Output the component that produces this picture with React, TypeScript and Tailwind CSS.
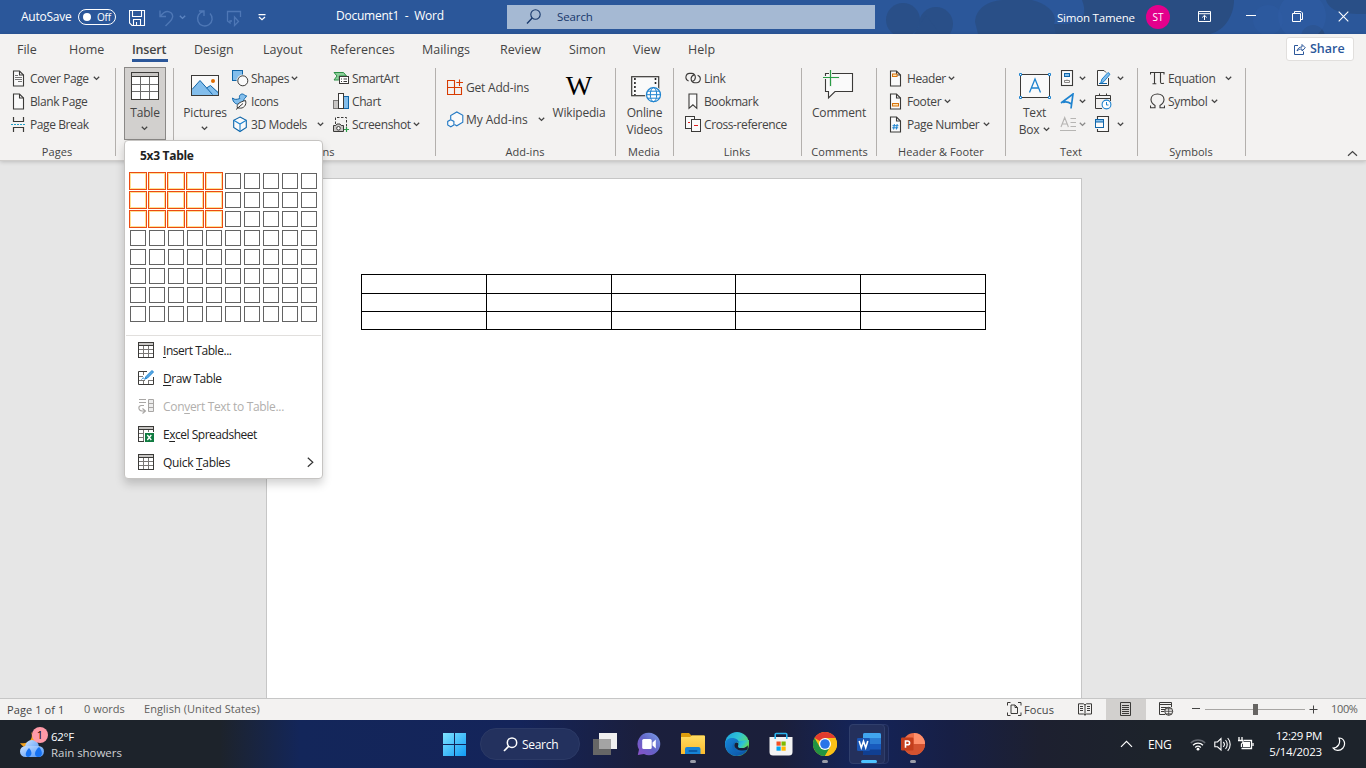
import React from "react";

type P = { className?: string };

function Svg({ w, h, className = "", children }: { w: number; h: number; className?: string; children: React.ReactNode }) {
  return (
    <svg width={w} height={h} viewBox={`0 0 ${w} ${h}`} fill="none" className={`block shrink-0 ${className}`}>
      {children}
    </svg>
  );
}

const INK = "#3b3a38";
const BLUE = "#1e83cf";

function Caret({ className = "" }: P) {
  return (
    <Svg w={7} h={5} className={className}>
      <path d="M0.8 0.8L3.5 3.4L6.2 0.8" stroke="#444" strokeWidth="1.3" />
    </Svg>
  );
}

/* ---------- Ribbon icons ---------- */

function PageShape({ children }: { children?: React.ReactNode }) {
  return (
    <Svg w={13} h={17}>
      <path d="M1.5 1H7.5L11.5 5V16H1.5Z" fill="#fafafa" stroke={INK} strokeWidth="1.1" />
      <path d="M7.5 1V5H11.5" stroke={INK} strokeWidth="1.1" />
      {children}
    </Svg>
  );
}
const CoverIcon = () => (
  <PageShape>
    <path d="M3 5.5H6M3 7.5H10M3 9.5H10M6 11.5H10" stroke="#777" strokeWidth="1" />
  </PageShape>
);
const HeaderIcon = () => (
  <PageShape>
    <rect x="3.5" y="4" width="4.5" height="2.5" fill="#fbe3b4" stroke="#d9730c" />
  </PageShape>
);
const FooterIcon = () => (
  <PageShape>
    <rect x="3.5" y="10.5" width="6" height="2.5" fill="#fbe3b4" stroke="#d9730c" />
  </PageShape>
);
const PageNumberIcon = () => (
  <PageShape>
    <path d="M5.4 8L4.6 13.5M8.2 8L7.4 13.5M3.5 9.7H9.5M3.2 11.8H9.2" stroke={BLUE} strokeWidth="1" />
  </PageShape>
);
const PageBreakIcon = () => (
  <Svg w={15} h={17}>
    <path d="M2.5 1V5.5H12.5V1M2.5 16V11.5H12.5V16" stroke={INK} strokeWidth="1.2" />
    <path d="M0 8.5H15" stroke="#1fa0c8" strokeDasharray="2 1" />
  </Svg>
);
const TableBigIcon = () => (
  <Svg w={28} h={28}>
    <rect x="0.5" y="0.5" width="27" height="27" fill="#fff" />
    <rect x="0.5" y="0.5" width="27" height="4" fill="#c8c6c4" />
    <path d="M9.5 5V27M18.5 5V27M1 12.5H27M1 19.5H27" stroke="#6b6b6b" />
    <path d="M0.5 4.5H27.5" stroke={INK} />
    <rect x="0.5" y="0.5" width="27" height="27" stroke={INK} />
  </Svg>
);
const PicturesIcon = () => (
  <Svg w={28} h={21}>
    <rect x="0.5" y="0.5" width="27" height="20" fill="#fafafa" stroke={INK} />
    <path d="M1 14.5L9 5.5L22 20H1Z" fill="#83beec" />
    <path d="M15 13.5L19.5 10.5L27 17V20H21.5Z" fill="#83beec" />
    <path d="M1 14.5L9 5.5L21.5 19.5M15.5 13L19.5 10.5L27 17.5" stroke="#0f65a8" />
    <circle cx="22" cy="6" r="2" fill="#e06c00" />
    <rect x="0.5" y="0.5" width="27" height="20" stroke={INK} />
  </Svg>
);
const ShapesIcon = () => (
  <Svg w={17} h={17}>
    <rect x="0.5" y="0.5" width="10" height="10" fill="#83beec" stroke="#0f65a8" />
    <circle cx="10.8" cy="10.8" r="6.2" fill="#f3f2f1" />
    <circle cx="10.8" cy="10.8" r="5" fill="#fafafa" stroke={INK} />
  </Svg>
);
const IconsIcon = () => (
  <Svg w={17} h={17}>
    <path d="M0.5 5C2.5 7 5 6.5 7.8 5.5C6.5 3 8.5 0.8 10.5 1C12 1.2 12.8 2.8 14.5 2.8C14 4.8 12.5 5 12 6.5C11 11 6 12 3.5 10.5C1.5 9 0.5 7 0.5 5Z" fill="#83beec" stroke="#0f65a8" />
    <path d="M5.5 15C4 11 8 9 13.5 7.5C15 12 11.5 16 7 15Z" fill="#fafafa" stroke={INK} />
    <path d="M4 16.5L11 10.5" stroke={INK} />
  </Svg>
);
const ModelsIcon = () => (
  <Svg w={17} h={17}>
    <path d="M8 1L14.3 4.3V11.5L8 15.5L1.7 11.5V4.3Z" fill="#fafafa" stroke="#0f65a8" strokeWidth="1.1" />
    <path d="M1.7 4.3L8 8L14.3 4.3M8 8V15.5" stroke={BLUE} strokeWidth="1.1" />
  </Svg>
);
const SmartArtIcon = () => (
  <Svg w={17} h={15}>
    <path d="M1 1.5H10.5L13.5 5H6V9H1L4 5Z" fill="#8ccf9a" stroke="#2a8f44" />
    <rect x="5.8" y="5" width="11" height="9" fill="#f3f2f1" />
    <rect x="6.5" y="5.5" width="9" height="7" fill="#fff" stroke={INK} />
    <path d="M8 8H9M10.5 8H14M8 10.5H9M10.5 10.5H14" stroke={INK} />
  </Svg>
);
const ChartIcon = () => (
  <Svg w={17} h={17}>
    <rect x="0.5" y="7.5" width="5" height="8" fill="#c8c6c4" stroke="#797775" />
    <rect x="10.5" y="3.5" width="5" height="12" fill="#83beec" stroke="#0f65a8" />
    <rect x="5.5" y="0.5" width="5" height="15" fill="#fff" stroke={INK} />
  </Svg>
);
const ScreenshotIcon = () => (
  <Svg w={17} h={17}>
    <path d="M2.5 8V1.5H13.5V11" stroke={INK} strokeDasharray="2.5 1.5" />
    <path d="M0.5 9.5H2.8L4 8H7L8.2 9.5H10.5V15.5H0.5Z" fill="#c8c6c4" stroke={INK} />
    <circle cx="5.5" cy="12.3" r="1.8" fill="#fff" stroke={INK} />
    <path d="M13.5 11V16M11 13.5H16" stroke="#2a9d46" strokeWidth="1.2" />
  </Svg>
);
const GetAddinsIcon = () => (
  <Svg w={17} h={17}>
    <path d="M0.5 1.5H7.5V15.5H0.5ZM0.5 8.5H14.5V15.5H0.5Z" stroke="#d83b01" strokeWidth="1.1" />
    <path d="M12.5 0.5V7M9.3 3.5H16" stroke="#d83b01" strokeWidth="1.1" />
  </Svg>
);
const MyAddinsIcon = () => (
  <Svg w={17} h={17}>
    <path d="M3.7 8V4.5L9.8 1L15.8 4.3V11.2L9.8 14.8L7.5 13.5" fill="#fafafa" stroke="#2379c4" strokeWidth="1.1" />
    <path d="M3.8 8.7L6.9 10.4V14L3.8 15.8L0.7 14V10.4Z" fill="#fafafa" stroke="#2379c4" strokeWidth="1.1" />
  </Svg>
);
const VideoIcon = () => (
  <Svg w={31} h={27}>
    <rect x="0.7" y="0.7" width="27" height="19" fill="#fafafa" stroke={INK} strokeWidth="1.2" />
    <path d="M3.9 2V19M24.5 2V10" stroke="#222" strokeWidth="1.6" strokeDasharray="2 2" />
    <circle cx="22.5" cy="18.7" r="8.5" fill="#f3f2f1" />
    <circle cx="22.5" cy="18.7" r="7" fill="#fff" stroke={BLUE} strokeWidth="1.2" />
    <ellipse cx="22.5" cy="18.7" rx="3.2" ry="7" stroke={BLUE} />
    <path d="M15.5 18.7H29.5M16.8 15.2H28.2M16.8 22.2H28.2" stroke={BLUE} />
  </Svg>
);
const LinkIcon = () => (
  <Svg w={17} h={13}>
    <path d="M3.6 9A3.9 3.9 0 0 1 4.6 1.4H6.6A4 4 0 0 1 7.2 9.3M12.6 3.2A3.9 3.9 0 0 1 11.6 10.8H9.6A4 4 0 0 1 9 3" stroke={INK} strokeWidth="1.1" />
  </Svg>
);
const BookmarkIcon = () => (
  <Svg w={10} h={17}>
    <path d="M1 1H8.8V15.3L4.9 11.8L1 15.3Z" fill="#fafafa" stroke={INK} strokeWidth="1.1" />
  </Svg>
);
const CrossRefIcon = () => (
  <Svg w={17} h={17}>
    <rect x="0.5" y="0.5" width="9" height="12" fill="#fafafa" stroke={INK} />
    <rect x="6.5" y="3.5" width="9" height="12" fill="#fafafa" stroke={INK} />
    <path d="M3 6.5H5M9 9.5H13" stroke="#e02020" strokeWidth="1.2" />
  </Svg>
);
const CommentIcon = () => (
  <Svg w={31} h={30}>
    <path d="M2.5 3.5H29.5V21.5H12L5.5 28V21.5H2.5Z" fill="#fafafa" stroke={INK} strokeWidth="1.1" />
    <path d="M0 7.5H17M7.5 0V17" stroke="#f3f2f1" strokeWidth="3" />
    <path d="M0 7.5H16M7.5 0V16" stroke="#2a9d46" strokeWidth="1.2" />
  </Svg>
);
const TextBoxIcon = () => (
  <Svg w={33} h={27}>
    <rect x="1.5" y="1.5" width="29" height="23" fill="#fafafa" stroke={INK} />
    <path d="M10.5 19.5L16 6L21.5 19.5M12.5 15H19.5" stroke={BLUE} strokeWidth="1.3" />
    <path d="M0.5 0.5H2.5V2.5H0.5ZM29.5 0.5H31.5V2.5H29.5ZM0.5 23.5H2.5V25.5H0.5ZM29.5 23.5H31.5V25.5H29.5Z" fill="#fff" stroke={BLUE} />
  </Svg>
);
const QuickPartsIcon = () => (
  <Svg w={17} h={17}>
    <rect x="1.5" y="0.5" width="11" height="15" fill="#fafafa" stroke={INK} strokeWidth="1.1" />
    <rect x="4.5" y="3.5" width="5" height="3" fill="#83beec" stroke="#0f65a8" />
    <path d="M4.5 10.5H7V9.5M4.5 12.5H9.5V10.5H4.5Z" stroke="#8a8886" />
  </Svg>
);
const WordArtIcon = () => (
  <Svg w={17} h={17}>
    <path d="M1 10L13 1L11 15.5M3 9.5C6 8 8.5 9 11.5 11" stroke={BLUE} strokeWidth="1.7" />
  </Svg>
);
const DropCapIcon = () => (
  <Svg w={17} h={17}>
    <path d="M1 11L4.7 1.5L8.4 11M2.2 8H7.2M10.5 2.5H16M10.5 6.5H16M10.5 10.5H16M0 14.5H16" stroke="#8f8d8b" strokeWidth="1.1" />
  </Svg>
);
const SignatureIcon = () => (
  <Svg w={17} h={17}>
    <path d="M13.5 8V15.5H2.5V0.5H9L11 2.5" fill="#fafafa" stroke={INK} />
    <path d="M5.5 13.5L7 9L13 2.5L15 4.2L9 11.5Z" fill="#83beec" stroke={BLUE} />
    <path d="M4 13.5H12" stroke="#0f65a8" />
  </Svg>
);
const DateIcon = () => (
  <Svg w={17} h={17}>
    <path d="M7 15.5H0.5V2.5H15.5V8M0.5 5.5H15.5M4.5 0.5V3M11.5 0.5V3" stroke={INK} />
    <circle cx="11.5" cy="11.5" r="4.4" fill="#fff" stroke={BLUE} strokeWidth="1.1" />
    <path d="M11.5 9V12H13.5" stroke={BLUE} />
  </Svg>
);
const ObjectIcon = () => (
  <Svg w={17} h={17}>
    <path d="M2.5 3V0.5H13.5V15.5H2.5V13" fill="#fafafa" stroke={INK} strokeWidth="1.1" />
    <rect x="0.5" y="3.5" width="8" height="8" fill="#fafafa" stroke="#0f65a8" />
    <rect x="0.5" y="3.5" width="8" height="2.5" fill="#83beec" stroke="#0f65a8" />
  </Svg>
);
const PiIcon = () => (
  <Svg w={15} h={15}>
    <path d="M0.5 3.5V1.5H14V3.5M4.5 1.5V12.5M2.5 12.7H6.3M10.5 1.5V11C10.5 12.8 12 12.8 14 12.2" stroke={INK} strokeWidth="1.1" />
  </Svg>
);
const OmegaIcon = () => (
  <Svg w={15} h={17}>
    <path d="M0.5 12.5V14.8H5V12.5C2.5 11 1 9.5 1 6.5C1 3 4 1 7.5 1S14 3 14 6.5C14 9.5 12.5 11 10 12.5V14.8H14.5V12.5" stroke={INK} strokeWidth="1.1" />
  </Svg>
);

/* ---------- Ribbon building blocks ---------- */

function Group({ label, width, children, labelClass = "pr-[2px]" }: { label: string; width: string; children: React.ReactNode; labelClass?: string }) {
  return (
    <div className={`relative flex h-[94px] shrink-0 flex-col ${width}`}>
      <div className="flex h-[77px]">{children}</div>
      <div className={`text-center text-[11px] leading-4 tracking-[0.05px] ${labelClass}`}>{label}</div>
      <i className="absolute top-px right-0 h-[88px] w-px bg-[#b3b0ad]" />
    </div>
  );
}

function Cmd({ icon, slot, label, textW, caret = false, top = "", text = "tracking-[-0.4px]" }: { icon: React.ReactNode; slot: string; label: string; textW: string; caret?: boolean; top?: string; text?: string }) {
  return (
    <div className={`flex h-[23px] items-center ${top}`}>
      <span className={`flex shrink-0 items-center ${slot}`}>{icon}</span>
      <span className={`whitespace-nowrap ${textW} ${text}`}>{label}</span>
      {caret && <Caret />}
    </div>
  );
}

function Big({ icon, label, width, pad = "", children }: { icon: React.ReactNode; label: string; width: string; pad?: string; children?: React.ReactNode }) {
  return (
    <div className={`flex shrink-0 flex-col items-center ${width}`}>
      <div className={`flex h-[38px] items-start ${pad}`}>{icon}</div>
      <div className="h-4 leading-4 whitespace-nowrap">{label}</div>
      {children}
    </div>
  );
}

const tabs: [string, string][] = [
  ["File", "w-[52px]"],
  ["Home", "w-[63px]"],
  ["Insert", "w-[62px]"],
  ["Design", "w-[69px]"],
  ["Layout", "w-[67px]"],
  ["References", "w-[92px]"],
  ["Mailings", "w-[78px]"],
  ["Review", "w-[69px]"],
  ["Simon", "w-[64px]"],
  ["View", "w-[55px]"],
  ["Help", "w-[40px]"],
];

function TitleBar() {
  return (
    <header className="relative flex h-[34px] shrink-0 bg-[#2b579a] text-white">
      <svg width="496" height="34" viewBox="0 0 496 34" className="absolute top-0 right-0">
        <g fill="#294d82">
          <g opacity=".75">
            <circle cx="33" cy="20" r="17" />
            <circle cx="66" cy="24" r="17" />
            <path d="M44 34L56 15L70 34Z" />
          </g>
          <path d="M105 22C106 8 118 0 136 0H162C178 4 188 14 184 24L190 34H108Z" opacity=".8" />
          <path d="M212 0H364C364 14 356 30 340 34H186L184 24C196 24 222 26 212 0Z" />
          <circle cx="443" cy="37" r="12" />
          <path d="M456 0H496V14C480 14 460 14 456 0Z" opacity=".8" />
        </g>
        <circle cx="432" cy="16" r="24" fill="#2f5da5" opacity=".5" />
        <circle cx="398" cy="20" r="15" fill="#2f5da5" opacity=".4" />
      </svg>
      <div className="relative flex w-full items-center text-[12px]">
        <span className="ml-[21px] w-[57px] tracking-[-0.25px]">AutoSave</span>
        <span className="flex h-4 w-[38px] items-center rounded-full border border-white pl-1 text-[10px] tracking-[-0.2px]">
          <i className="mr-[6px] h-2 w-2 rounded-full bg-white" />
          Off
        </span>
        <Svg w={17} h={17} className="mt-[3px] ml-[13px]">
          <path d="M0.5 0.5H15.5V15.5H3L0.5 13Z M3.5 0.5V6.5H12.5V0.5 M4.5 15.5V9.5H11.5V15.5 M7.5 12V15" stroke="#fff" strokeWidth="1.1" />
        </Svg>
        <Svg w={17} h={17} className="mt-[3px] ml-[13px] opacity-35">
          <path d="M1 0.5V6.5H7M1.5 6C5 1.5 9 0.5 12 2.8C15 5.5 13.5 9 11 11.5L6.5 16" stroke="#8fb4ea" strokeWidth="1.4" />
        </Svg>
        <Svg w={7} h={5} className="ml-[3px] opacity-50">
          <path d="M0.8 0.8L3.5 3.4L6.2 0.8" stroke="#8fb4ea" strokeWidth="1.4" />
        </Svg>
        <Svg w={18} h={18} className="mt-[3px] ml-[10px] opacity-35">
          <path d="M3 1H8V6M14 3.5A7.3 7.3 0 1 1 7.5 1.5" stroke="#8fb4ea" strokeWidth="1.4" />
        </Svg>
        <Svg w={16} h={17} className="mt-[3px] ml-[12px] opacity-35">
          <path d="M6 11H4V13L1.5 11V1.5H14.5V7M8.5 7L12.5 11.5L8.5 15.5Z" stroke="#8fb4ea" strokeWidth="1.3" />
        </Svg>
        <Svg w={8} h={7} className="ml-[16px]">
          <path d="M0.5 0.7H7.5M1 3L4 5.8L7 3" stroke="#fff" strokeWidth="1.2" />
        </Svg>
        <span className="mb-[3px] ml-[70px] w-[171px] tracking-[-0.25px] whitespace-pre">Document1  -  Word</span>
        <div className="flex h-6 w-[368px] items-center bg-[#a5b9d3] text-[#17376b]">
          <Svg w={16} h={16} className="ml-[19px]">
            <circle cx="9.5" cy="5.5" r="4.7" stroke="#17376b" strokeWidth="1.1" />
            <path d="M6.2 9L1 14.5" stroke="#17376b" strokeWidth="1.3" />
          </Svg>
          <span className="ml-[15px] text-[11.5px] tracking-[-0.1px]">Search</span>
        </div>
        <span className="mt-px ml-[182px] w-[89px] text-[11.5px] tracking-[-0.2px] whitespace-nowrap">Simon Tamene</span>
        <span className="flex h-6 w-6 items-center justify-center rounded-full bg-[#e3008c] text-[10px]">ST</span>
        <Svg w={13} h={11} className="mb-px ml-[28px]">
          <path d="M0.5 0.5H12.5V10.5H0.5ZM0.5 2.7H12.5M6.5 9V4.5M4.2 6.5L6.5 4.3L8.8 6.5" stroke="#fff" />
        </Svg>
        <i className="mb-[3px] ml-[35px] h-px w-[10px] bg-white" />
        <Svg w={11} h={11} className="mb-[2px] ml-[36px]">
          <path d="M0.5 2.5H8.5V10.5H0.5ZM2.5 2V0.5H9L10.5 2V8.5H9" stroke="#fff" />
        </Svg>
        <Svg w={11} h={11} className="mb-[2px] ml-[35px]">
          <path d="M0.7 0.7L10.3 10.3M10.3 0.7L0.7 10.3" stroke="#fff" strokeWidth="1.1" />
        </Svg>
      </div>
    </header>
  );
}

function Ribbon() {
  return (
    <div className="relative z-10 h-[127px] shrink-0 border-b border-[#cfcdcb] bg-[#f3f2f1] shadow-[0_1px_4px_rgba(0,0,0,0.18)]">
      <nav className="flex h-[33px] pl-[17px] text-[12.5px]">
        {tabs.map(([name, w]) => (
          <div key={name} className={`pt-[6px] ${w}`}>
            <span className={name === "Insert" ? "block h-[22px] w-9 border-b-[3px] border-[#2b579a] leading-5 font-semibold tracking-[-0.2px]" : "block leading-5"}>{name}</span>
          </div>
        ))}
        <div className="mt-[3px] ml-[558px] flex h-6 w-[68px] items-center rounded-[3px] border border-[#e1dfdd] bg-white pl-[7px] font-semibold text-[#2b579a]">
          <Svg w={12} h={12}>
            <path d="M4 2.5H0.5V11.5H9.5V8.5M3 8C3.5 5.5 5.5 4 8 4V1.5L11.3 4.8L8 8V6C6 6 4.5 6.5 3 8Z" stroke="#2b579a" />
          </Svg>
          <span className="mt-px ml-[4px]">Share</span>
        </div>
      </nav>

      <div className="flex text-[12px] tracking-[-0.2px]">
        <Group label="Pages" width="w-[116px]">
          <div className="pl-3">
            <Cmd icon={<CoverIcon />} slot="w-[18px]" label="Cover Page" textW="w-[63px]" caret />
            <Cmd icon={<PageShape />} slot="w-[18px]" label="Blank Page" textW="" />
            <Cmd icon={<PageBreakIcon />} slot="w-[19px] -ml-px" label="Page Break" textW="" />
          </div>
        </Group>

        <Group label="" width="w-[58px]">
          <div className="ml-2 flex h-[73px] w-[42px] shrink-0 flex-col items-center border border-[#8a8886] bg-[#d2d0ce] pt-1">
            <TableBigIcon />
            <span className="mt-[5px] leading-4">Table</span>
            <Caret className="mt-[5px] mr-px" />
          </div>
        </Group>

        <Group label="Illustrations" width="w-[262px]">
          <Big icon={<PicturesIcon />} label="Pictures" width="w-[62px]" pad="pt-2">
            <Caret className="mt-[5px] mr-[2px]" />
          </Big>
          <div className="ml-[-4px] w-[101px]">
            <Cmd icon={<ShapesIcon />} slot="w-[19px]" label="Shapes" textW="w-[40px]" caret />
            <Cmd icon={<IconsIcon />} slot="w-[19px]" label="Icons" textW="" />
            <Cmd icon={<ModelsIcon />} slot="w-[19px]" label="3D Models" textW="w-[66px]" caret />
          </div>
          <div>
            <Cmd icon={<SmartArtIcon />} slot="w-[19px]" label="SmartArt" textW="" />
            <Cmd icon={<ChartIcon />} slot="w-[19px]" label="Chart" textW="" />
            <Cmd icon={<ScreenshotIcon />} slot="w-[19px]" label="Screenshot" textW="w-[61px]" caret />
          </div>
        </Group>

        <Group label="Add-ins" width="w-[180px]">
          <div className="ml-[11px] w-[100px] pt-[9px]">
            <Cmd icon={<GetAddinsIcon />} slot="w-[19px]" label="Get Add-ins" textW="" text="tracking-[-0.2px]" />
            <Cmd icon={<MyAddinsIcon />} slot="w-[19px]" label="My Add-ins" textW="w-[72px]" text="tracking-[-0.05px]" caret top="mt-[9px]" />
          </div>
          <Big
            icon={<span className="font-['Liberation_Serif',serif] text-[28px] leading-[32px] tracking-normal text-black">W</span>}
            label="Wikipedia"
            width="w-[64px]"
            pad="pt-[3px]"
          />
        </Group>

        <Group label="Media" width="w-[58px]">
          <Big icon={<VideoIcon />} label="Online" width="w-[57px]" pad="pt-[9px] pl-[3px]">
            <div className="h-4 pt-px leading-4">Videos</div>
          </Big>
        </Group>

        <Group label="Links" width="w-[128px]">
          <div className="ml-[11px]">
            <Cmd icon={<LinkIcon />} slot="w-[19px]" label="Link" textW="" />
            <Cmd icon={<BookmarkIcon />} slot="w-[19px] pl-[3px]" label="Bookmark" textW="" />
            <Cmd icon={<CrossRefIcon />} slot="w-[19px]" label="Cross-reference" textW="" />
          </div>
        </Group>

        <Group label="Comments" width="w-[75px]" labelClass="">
          <Big icon={<CommentIcon />} label="Comment" width="w-[74px]" pad="pt-[3px] pr-[1px]" />
        </Group>

        <Group label="Header & Footer" width="w-[129px]" labelClass="pr-px">
          <div className="ml-[12px]">
            <Cmd icon={<HeaderIcon />} slot="w-[18px]" label="Header" textW="w-[41px]" caret />
            <Cmd icon={<FooterIcon />} slot="w-[18px]" label="Footer" textW="w-[37px]" caret />
            <Cmd icon={<PageNumberIcon />} slot="w-[18px]" label="Page Number" textW="w-[76px]" caret />
          </div>
        </Group>

        <Group label="Text" width="w-[132px]">
          <Big icon={<TextBoxIcon />} label="Text" width="w-[57px]" pad="pt-[6px] pl-[2px]">
            <div className="flex h-4 items-center gap-[4px] pt-px leading-4">
              Box <Caret />
            </div>
          </Big>
          <div className="ml-[-3px] w-[35px]">
            <Cmd icon={<QuickPartsIcon />} slot="w-[19px]" label="" textW="" caret />
            <Cmd icon={<WordArtIcon />} slot="w-[19px]" label="" textW="" caret />
            <div className="opacity-60">
              <Cmd icon={<DropCapIcon />} slot="w-[19px]" label="" textW="" caret />
            </div>
          </div>
          <div>
            <Cmd icon={<SignatureIcon />} slot="w-[22px]" label="" textW="" caret />
            <Cmd icon={<DateIcon />} slot="w-[22px]" label="" textW="" />
            <Cmd icon={<ObjectIcon />} slot="w-[22px]" label="" textW="" caret />
          </div>
        </Group>

        <Group label="Symbols" width="w-[108px]">
          <div className="ml-[12px]">
            <Cmd icon={<PiIcon />} slot="w-[18px]" label="Equation" textW="w-[57px]" text="tracking-[-0.3px]" caret />
            <Cmd icon={<OmegaIcon />} slot="w-[18px]" label="Symbol" textW="w-[43px]" text="tracking-[-0.3px]" caret />
          </div>
        </Group>

        <Svg w={11} h={7} className="mt-[83px] ml-[101px]">
          <path d="M1 5.8L5.5 1.5L10 5.8" stroke="#444" strokeWidth="1.2" />
        </Svg>
      </div>
    </div>
  );
}

/* ---------- Table drop-down ---------- */

const GridGlyph = () => (
  <>
    <rect x="0.5" y="0.5" width="15" height="15" fill="#fff" />
    <rect x="0.5" y="0.5" width="15" height="3" fill="#c8c6c4" />
    <path d="M5.5 4V15M10.5 4V15M1 7.5H15M1 11.5H15" stroke="#797775" />
    <path d="M0.5 3.5H15.5" stroke={INK} />
    <rect x="0.5" y="0.5" width="15" height="15" stroke={INK} />
  </>
);

const menu: { pre: string; key: string; post: string; icon: React.ReactNode; track: string; off?: boolean; sub?: boolean }[] = [
  { pre: "", key: "I", post: "nsert Table...", icon: <GridGlyph />, track: "tracking-[-0.45px]" },
  {
    pre: "",
    key: "D",
    post: "raw Table",
    track: "tracking-[-0.45px]",
    icon: (
      <>
        <path d="M9 1.5H0.5V14.5H15.5V7" fill="#fff" stroke={INK} />
        <path d="M1 6.5H5M1 10.5H7M5.5 2V5M5.5 11V14M10.5 10V14M10 10.5H15" stroke="#797775" />
        <path d="M7 9L8 6.5L14 0.5L15.5 2L9.5 8Z" fill="#5aa9e6" stroke={BLUE} />
        <path d="M3.5 9.5C5 7.5 6 7.5 6.5 9.5" stroke={BLUE} />
      </>
    ),
  },
  {
    pre: "Con",
    key: "v",
    post: "ert Text to Table...",
    track: "tracking-[-0.32px]",
    off: true,
    icon: (
      <>
        <path d="M1 1.5H8M1 4.5H8M6 7.5H3C0 8 0 12.5 4 13H7M4.5 10.5L7.5 13L4.5 15.5" stroke="#a8a6a4" strokeWidth="1.1" />
        <path d="M10.5 1.5H15.5V13.5H10.5ZM10.5 5.5H15.5M10.5 9.5H15.5" fill="#eee" stroke="#a8a6a4" />
      </>
    ),
  },
  {
    pre: "E",
    key: "x",
    post: "cel Spreadsheet",
    track: "tracking-[-0.48px]",
    icon: (
      <>
        <GridGlyph />
        <rect x="6" y="6" width="10" height="10" fill="#fff" />
        <rect x="7" y="7" width="9" height="9" fill="#107c41" />
        <path d="M9.3 9L13.3 14M13.3 9L9.3 14" stroke="#fff" strokeWidth="1.3" />
      </>
    ),
  },
  { pre: "Quick ", key: "T", post: "ables", icon: <GridGlyph />, track: "tracking-[-0.32px]", sub: true },
];

function TableMenu() {
  return (
    <div className="absolute top-[140px] left-[124px] z-20 h-[339px] w-[199px] rounded-[4px] border border-[#c6c4c2] bg-white shadow-[0_5px_10px_rgba(0,0,0,0.18)]">
      <div className="h-[31px] pt-[6px] pl-[15px] text-[12px] leading-[18px] font-bold tracking-[-0.3px] text-[#222]">5x3 Table</div>
      <div className="ml-1 grid w-[190px] grid-cols-10">
        {Array.from({ length: 80 }, (_, i) => {
          const on = i % 10 < 5 && i < 30;
          return (
            <div key={i} className="h-[19px] w-[19px]">
              {on ? (
                <div className="h-[18px] w-[18px] border border-[#eb4b14]">
                  <div className="h-4 w-4 border border-[#ffe093]" />
                </div>
              ) : (
                <div className="h-[18px] w-[18px] p-px">
                  <div className="h-4 w-4 border border-[#636363]" />
                </div>
              )}
            </div>
          );
        })}
      </div>
      <div className="mx-px mt-[11px] mb-px h-px bg-[#e1dfdd]" />
      {menu.map((m) => (
        <div key={m.post} className={`flex h-7 items-center pl-[13px] text-[12px] ${m.track} ${m.off ? "text-[#b1afad]" : "text-[#222]"}`}>
          <Svg w={16} h={16} className="mb-[2px]">
            {m.icon}
          </Svg>
          <span className="ml-[9px] grow whitespace-pre">
            {m.pre}
            <u className="underline-offset-2">{m.key}</u>
            {m.post}
          </span>
          {m.sub && (
            <Svg w={7} h={11} className="mr-2 mb-[2px]">
              <path d="M0.8 0.8L5.8 5.3L0.8 9.8" stroke="#333" strokeWidth="1.2" />
            </Svg>
          )}
        </div>
      ))}
    </div>
  );
}

function StatusBar() {
  return (
    <div className="flex h-[22px] shrink-0 items-center border-t border-[#c6c6c6] bg-[#f3f2f1] text-[11px] text-[#444]">
      <span className="mt-[2px] ml-[7px] w-[77px] tracking-[0.1px]">Page 1 of 1</span>
      <span className="w-[60px] text-[#605e5c]">0 words</span>
      <span className="w-[863px] tracking-[0.06px] text-[#605e5c]">English (United States)</span>
      <Svg w={15} h={15}>
        <path d="M3.5 0.5H0.5V3.5M0.5 10.5V13.5H3.5M11 0.5H14V3.5M14 10.5V13.5H11M4 3H8L10.5 5.5V11.5H4ZM8 3V5.5H10.5" stroke={INK} />
      </Svg>
      <span className="mt-[2px] ml-[2px] w-[54px] tracking-[0.1px]">Focus</span>
      <Svg w={14} h={13} className="mb-px">
        <path d="M7 1.5V12.5M7 2L5.5 0.8H0.5V11H5.5L7 12L8.5 11H13.5V0.8H8.5ZM2 3.5H5M2 5.5H5M2 7.5H5M9 3.5H12M9 5.5H12M9 7.5H12" stroke={INK} />
      </Svg>
      <span className="ml-[14px] flex h-[21px] w-10 items-center justify-center bg-[#d2d0ce] pb-px">
        <Svg w={12} h={14}>
          <path d="M0.5 0.5H10.5V13.5H0.5ZM2 3.5H9M2 5.5H9M2 7.5H9M2 9.5H9M2 11.5H9" stroke={INK} />
        </Svg>
      </span>
      <Svg w={15} h={14} className="mb-px ml-[13px]">
        <path d="M6 12.5H0.5V0.5H12.5V5M0.5 2.5H12.5M2 5.5H9M2 7.5H6M2 9.5H5" stroke={INK} />
        <circle cx="9.7" cy="9.3" r="4" fill="#f3f2f1" stroke={INK} />
        <path d="M5.7 9.3H13.7M9.7 5.3V13.3M7 6.8H12.5M7 11.8H12.5" stroke={INK} strokeWidth=".8" />
      </Svg>
      <i className="mb-[2px] ml-[18px] h-px w-[8px] bg-[#444]" />
      <span className="relative ml-[5px] flex h-3 w-[100px] items-center">
        <i className="h-px w-full bg-[#a8a6a4]" />
        <i className="absolute left-12 h-[11px] w-[5px] bg-[#666462]" />
      </span>
      <Svg w={9} h={9} className="mb-px ml-[4px]">
        <path d="M0.5 4.5H8.5M4.5 0.5V8.5" stroke="#444" />
      </Svg>
      <span className="ml-[13px] tracking-[-0.35px] text-[#605e5c]">100%</span>
    </div>
  );
}

/* ---------- Taskbar ---------- */

const WindowsLogo = () => (
  <Svg w={24} h={24}>
    <defs>
      <linearGradient id="win" x1="0" y1="0" x2="1" y2="1">
        <stop stopColor="#7fe3ff" />
        <stop offset="1" stopColor="#109bf5" />
      </linearGradient>
    </defs>
    <path d="M0 1H11V12H0ZM12 1H23V12H12ZM0 13H11V24H0ZM12 13H23V24H12Z" fill="url(#win)" />
  </Svg>
);
const TaskViewLogo = () => (
  <Svg w={24} h={24}>
    <rect x="0" y="7" width="18" height="16" fill="#666" />
    <rect x="6" y="1" width="18" height="16" fill="#f0f0f0" />
    <rect x="6" y="7" width="12" height="10" fill="#a4a4a4" />
  </Svg>
);
const ChatLogo = () => (
  <Svg w={24} h={24}>
    <defs>
      <linearGradient id="chat" x1="0" y1="1" x2="1" y2="0">
        <stop stopColor="#8a50c8" />
        <stop offset=".5" stopColor="#6264c7" />
        <stop offset="1" stopColor="#7ba0e8" />
      </linearGradient>
    </defs>
    <path d="M12 0.8A11.2 11.2 0 1 1 7 22L0.8 23L2 17.5A11.2 11.2 0 0 1 12 0.8Z" fill="url(#chat)" />
    <rect x="5.2" y="7" width="9.5" height="10" rx="1.5" fill="#fff" />
    <path d="M15.5 10.5L18.8 7.5V16.5L15.5 13.5Z" fill="#fff" />
  </Svg>
);
const ExplorerLogo = () => (
  <Svg w={24} h={24}>
    <defs>
      <linearGradient id="folder" x1="0" y1="0" x2="0" y2="1">
        <stop stopColor="#ffdc62" />
        <stop offset="1" stopColor="#fdbb2c" />
      </linearGradient>
    </defs>
    <path d="M0 2Q0 1 1 1H8L10.5 3.5H23Q24 3.5 24 5V9H0Z" fill="#dd9c0c" />
    <path d="M0 5H9L11 3.5H23Q24 3.5 24 4.5V22H0Z" fill="url(#folder)" />
    <path d="M4 22V17Q4 15 6 15H17.5Q19.5 15 19.5 17V22Z" fill="#1683d6" />
    <rect x="7.5" y="18" width="9" height="2" rx="1" fill="#0b5ba8" />
  </Svg>
);
const EdgeLogo = () => (
  <Svg w={24} h={24}>
    <defs>
      <linearGradient id="edgeTop" x1="0" y1="0" x2="1" y2=".6">
        <stop stopColor="#1b9fe0" />
        <stop offset=".5" stopColor="#2fc3d4" />
        <stop offset="1" stopColor="#67e04e" />
      </linearGradient>
      <linearGradient id="edgeLow" x1="0" y1="0" x2="1" y2="1">
        <stop stopColor="#1686d8" />
        <stop offset="1" stopColor="#0c4fa0" />
      </linearGradient>
    </defs>
    <circle cx="12" cy="12" r="12" fill="url(#edgeTop)" />
    <path d="M0.1 11C1 7 5 5.5 8.5 6C12 6.5 14 8.5 14 11C12 9 9 11 9 14C9 19 15 20 22.5 17.5C19 24 12 25 7 23C2 20.5 0 16 0.1 11Z" fill="url(#edgeLow)" />
    <path d="M9.3 12.5C9 16 13 18.8 19 17.5C20.5 17.2 22 17 22.5 17.5C17 21.5 10 20.5 8 17C6.5 14 8 11 10.5 10Z" fill="#1166b8" />
    <path d="M13.3 11.3C14 13 13 14 13.4 15C14.5 16.5 20 16.5 22.8 13V17.5C18 19.8 10 18.5 9.3 13.5C9.5 11 11.5 9.5 13.3 11.3Z" fill="#171d38" />
    <path d="M13.4 15.2C16 17 21 16.2 23.5 12.5L24 8L14 9C14.5 13 12.5 13.5 13.4 15.2Z" fill="url(#edgeTop)" />
  </Svg>
);
const StoreLogo = () => (
  <Svg w={24} h={24}>
    <path d="M0.5 5H23.5V20Q23.5 23.5 20 23.5H4Q0.5 23.5 0.5 20Z" fill="#f3f3f3" />
    <path d="M6.2 7V2.5Q6.2 1.5 7.2 1.5H16.8Q17.8 1.5 17.8 2.5V7" stroke="#2ab4ee" strokeWidth="1.6" />
    <rect x="7.5" y="9.5" width="4.2" height="4.2" fill="#f25022" />
    <rect x="12.5" y="9.5" width="4.2" height="4.2" fill="#7fba00" />
    <rect x="7.5" y="14.5" width="4.2" height="4.2" fill="#00a4ef" />
    <rect x="12.5" y="14.5" width="4.2" height="4.2" fill="#ffb900" />
  </Svg>
);
const ChromeLogo = () => (
  <Svg w={24} h={24}>
    <circle cx="12" cy="12" r="12" fill="#fbc116" />
    <path d="M12 12L1.6 6A12 12 0 0 1 22.4 6H12Z" fill="#e33b2e" />
    <path d="M1.6 6A12 12 0 0 0 12 24L17.2 15L12 12L6.8 15Z" fill="#229342" />
    <path d="M22.4 6H12L17.2 15L12 24A12 12 0 0 0 22.4 6Z" fill="#fbc116" />
    <circle cx="12" cy="12" r="6" fill="#fff" />
    <circle cx="12" cy="12" r="4.8" fill="#2a74e8" />
  </Svg>
);
const WordLogo = () => (
  <Svg w={24} h={24}>
    <rect x="6" y="1" width="18" height="22" rx="1.5" fill="#185abd" />
    <path d="M6 2.5Q6 1 7.5 1H22.5Q24 1 24 2.5V6.5H6Z" fill="#41a5ee" />
    <rect x="6" y="6.5" width="18" height="5.5" fill="#2b7cd3" />
    <path d="M6 17.5H24V21.5Q24 23 22.5 23H7.5Q6 23 6 21.5Z" fill="#103f91" />
    <rect x="0" y="6" width="13" height="13" rx="1.2" fill="#1a55b3" />
    <path d="M2.2 9L4.3 15.7L6.5 9.3L8.7 15.7L10.8 9" stroke="#fff" strokeWidth="1.6" />
  </Svg>
);
const PowerPointLogo = () => (
  <Svg w={24} h={24}>
    <circle cx="13" cy="12" r="11" fill="#ed6c47" />
    <path d="M13 1A11 11 0 0 1 24 12H13Z" fill="#ff8f6b" />
    <path d="M2 12H24A11 11 0 0 1 2 12Z" fill="#d35230" />
    <rect x="0" y="5.5" width="12.5" height="13" rx="1.2" fill="#c43e1c" />
    <path d="M4.5 15.7V9H6.7C9.2 9 9.2 12.8 6.7 12.8H4.5" stroke="#fff" strokeWidth="1.6" />
  </Svg>
);

const apps: { id: string; icon: React.ReactNode; state?: "open" | "active" }[] = [
  { id: "taskview", icon: <TaskViewLogo /> },
  { id: "chat", icon: <ChatLogo /> },
  { id: "explorer", icon: <ExplorerLogo />, state: "open" },
  { id: "edge", icon: <EdgeLogo /> },
  { id: "store", icon: <StoreLogo /> },
  { id: "chrome", icon: <ChromeLogo />, state: "open" },
  { id: "word", icon: <WordLogo />, state: "active" },
  { id: "powerpoint", icon: <PowerPointLogo />, state: "open" },
];

function Taskbar() {
  return (
    <footer className="flex h-12 shrink-0 items-center bg-[linear-gradient(90deg,#1d232b_0px,#1d232b_220px,#13265a_300px,#14245a_520px,#1b1f3d_640px,#1b1f3a_780px,#14245a_860px,#171f45_950px,#1d2030_1040px,#1d232b_1150px)] text-white">
      <div className="relative ml-[20px] h-8 w-[31px]">
        <svg width="30" height="32" viewBox="0 0 30 32" className="block">
          <defs>
            <linearGradient id="cloud" x1="0" y1="0" x2="1" y2="1">
              <stop stopColor="#c9e0ff" />
              <stop offset="1" stopColor="#4d95f7" />
            </linearGradient>
          </defs>
          <path d="M11 4C14 10 9 17 0 15C4 22 16 22 18 12Z" fill="#f5a21b" />
          <circle cx="12" cy="19" r="7" fill="url(#cloud)" />
          <rect x="0" y="18" width="24" height="11" rx="5.5" fill="url(#cloud)" />
          <path d="M9 20C12 23 13 28 8 29C4 28 6 23 9 20ZM19 19C23 23 23 29 18 29C13 28 15 22 19 19Z" fill="#1672f2" />
        </svg>
        <span className="absolute -top-px left-[12px] flex h-4 w-4 items-center justify-center rounded-full bg-[#ff9aa8] text-[11px] text-black">1</span>
      </div>
      <div className="w-[392px] pt-px text-[11.5px] leading-4">
        <div className="font-medium tracking-[-0.3px]">62°F</div>
        <div className="tracking-[-0.05px] text-[#cfd1d4]">Rain showers</div>
      </div>
      <WindowsLogo />
      <div className="ml-[13px] flex h-8 w-[100px] items-center rounded-full border border-[#2c3a66] bg-[#23315e] pl-[22px] text-[12px] tracking-[-0.3px]">
        <Svg w={15} h={15}>
          <circle cx="9" cy="5.7" r="4.7" stroke="#fff" strokeWidth="1.5" />
          <path d="M5.8 9.2L1 14" stroke="#fff" strokeWidth="1.7" />
        </Svg>
        <span className="mt-px ml-1">Search</span>
      </div>
      <div className="ml-[3px] flex">
        {apps.map((a) => (
          <div key={a.id} className="relative flex h-12 w-11 items-center justify-center">
            {a.state === "active" && (
              <>
                <i className="absolute top-1 left-[2px] h-10 w-10 rounded-[4px] border border-[#29376a] bg-[#1c2853]" />
                <i className="absolute top-1 left-[2px] h-10 w-[36px] rounded-[4px] border border-[#303f6c] bg-[#24305c]" />
              </>
            )}
            <span className="relative">{a.icon}</span>
            {a.state === "open" && <i className="absolute bottom-[5px] h-[3px] w-[6px] rounded-full bg-[#9a9da8]" />}
            {a.state === "active" && <i className="absolute bottom-[5px] h-[3px] w-4 rounded-full bg-[#4cc2ff]" />}
          </div>
        ))}
      </div>
      <Svg w={13} h={8} className="ml-[185px]">
        <path d="M1 6.8L6.5 1.3L12 6.8" stroke="#fff" strokeWidth="1.2" />
      </Svg>
      <span className="mt-px ml-[15px] w-[42px] text-[12px] tracking-[-0.3px]">ENG</span>
      <Svg w={16} h={13}>
        <path d="M0.8 5A10.2 10.2 0 0 1 15.2 5" stroke="#666a72" strokeWidth="1.3" />
        <path d="M3 7.2A7.2 7.2 0 0 1 13 7.2M5.2 9.4A4.2 4.2 0 0 1 10.8 9.4" stroke="#fff" strokeWidth="1.3" />
        <circle cx="8" cy="11.2" r="1.4" fill="#fff" />
      </Svg>
      <Svg w={17} h={15} className="ml-[8px]">
        <path d="M0.8 5H3.5L7 1.5V13L3.5 9.8H0.8ZM9.3 5A3.5 3.5 0 0 1 9.3 9.8M11.5 3A6.5 6.5 0 0 1 11.5 11.8M13.7 1A9.5 9.5 0 0 1 13.7 13.8" stroke="#fff" strokeWidth="1.1" />
      </Svg>
      <Svg w={17} h={14} className="mb-px ml-[6px]">
        <path d="M2 0V3M5 0V3M1 3.5H6V5.5L4.5 7V10" stroke="#fff" strokeWidth="1.3" />
        <path d="M7 3.5H14.5V11.5H4.5" stroke="#fff" strokeWidth="1.3" />
        <rect x="6" y="5" width="7" height="5" fill="#fff" />
        <path d="M16 6V9" stroke="#fff" strokeWidth="1.3" />
      </Svg>
      <div className="ml-[8px] w-[60px] text-right text-[11.5px] leading-4 tracking-[-0.2px] whitespace-nowrap">
        <div className="tracking-[-0.4px]">12:29 PM</div>
        <div>5/14/2023</div>
      </div>
      <Svg w={14} h={15} className="ml-[10px]">
        <path d="M7 1C12.5 1 14 7 11 11C8 14.5 3 14 1 11C6 11 9 6 7 1Z" stroke="#fff" strokeWidth="1.2" />
      </Svg>
    </footer>
  );
}

export default function App() {
  return (
    <div className="relative flex h-[768px] w-[1366px] flex-col overflow-hidden bg-[#e6e6e6] font-['Open_Sans','Noto_Sans',sans-serif] text-[#444]">
      <TitleBar />
      <Ribbon />
      <main className="flex min-h-0 grow justify-center pt-[17px] pr-[18px]">
        <div className="w-[816px] border border-b-0 border-[#c6c6c6] bg-white pt-[95px] pl-[94px]">
          <table className="w-[625px] table-fixed border-collapse">
            <tbody>
              {["h-[19px]", "h-[18px]", "h-[18px]"].map((h, r) => (
                <tr key={r} className={h}>
                  {[0, 1, 2, 3, 4].map((c) => (
                    <td key={c} className="border border-black p-0" />
                  ))}
                </tr>
              ))}
            </tbody>
          </table>
        </div>
      </main>
      <StatusBar />
      <Taskbar />
      <TableMenu />
    </div>
  );
}
